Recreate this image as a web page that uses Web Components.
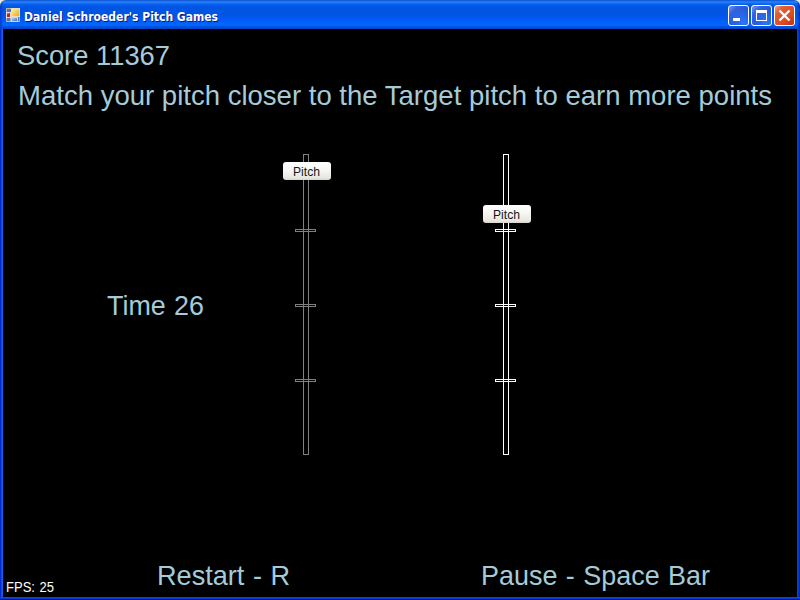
<!DOCTYPE html>
<html lang="en">
<head>
<meta charset="utf-8">
<title>Daniel Schroeder's Pitch Games</title>
<style>
html,body{margin:0;width:800px;height:600px;overflow:hidden;background:#ece9d8}
</style>
</head>
<body>
<game-window></game-window>
<script>
const define = (name, html) => customElements.define(name, class extends HTMLElement {
  constructor() {
    super();
    const t = document.createElement('template');
    t.innerHTML = html;
    this.attachShadow({mode: 'open'}).append(t.content.cloneNode(true));
  }
});

/* One line of text fitted to a given advance width. */
customElements.define('game-text', class extends HTMLElement {
  connectedCallback() {
    if (this.shadowRoot) return;
    const w = +this.getAttribute('length'), h = +this.getAttribute('height'), size = this.getAttribute('size');
    const root = this.attachShadow({mode: 'open'});
    root.innerHTML = `<style>:host{display:block;width:${w}px;height:${h}px}
      svg{display:block;overflow:visible}
      text{fill:currentColor;font-family:inherit;font-size:${size}px}</style>
      <svg width="${w}" height="${h}"><text x="0" y="${this.getAttribute('base')}" textLength="${w}" lengthAdjust="spacingAndGlyphs"></text></svg>`;
    root.querySelector('text').textContent = this.getAttribute('text');
  }
});

define('window-icon', `<style>:host{display:block;width:14px;height:14px}svg{display:block}</style>
<svg width="14" height="14" viewBox="0 0 14 14" shape-rendering="crispEdges">
<defs><linearGradient id="y" x2="1" y2="1"><stop stop-color="#fff3a0"/><stop offset="1" stop-color="#efa711"/></linearGradient>
<linearGradient id="b" x2="1" y2="1"><stop stop-color="#b5d0fa"/><stop offset="1" stop-color="#386cd0"/></linearGradient></defs>
<path d="M0 0h5v4H0zM0 10h5v4H0zM12 9h2v5h-2z" fill="#b9b5a9"/>
<path d="M1 1h4v3H1zM1 10h3v3H1zM12 9h1v4h-1z" fill="#4775ce"/>
<rect y="4" width="5" height="6" fill="#e6d9d0"/><rect x="1" y="5" width="3" height="4" fill="#c22518"/><rect x="1" y="5" width="2" height="1" fill="#ee7258"/>
<rect x="5" width="9" height="9" fill="#e8dfb8"/><rect x="6" y="1" width="7" height="7" fill="url(#y)"/>
<rect x="5" y="9" width="7" height="5" fill="#c9d7ed"/><rect x="6" y="10" width="5" height="3" fill="url(#b)"/>
</svg>`);

define('window-button', `<style>
:host{display:block;box-sizing:border-box;width:21px;height:21px;border:1px solid #fff;border-radius:3px;
background:radial-gradient(circle at 75% 85%,#2b79fa,transparent 65%),linear-gradient(135deg,#7898ec 0,#3463df 25%,#1f51d5 70%,#1742bd 100%)}
:host([kind=close]){background:linear-gradient(135deg,#f3a288 0,#df5c37 25%,#df4b20 65%,#b9330b 100%)}
svg{display:block}g{display:none}
:host([kind=min]) .min,:host([kind=max]) .max,:host([kind=close]) .close{display:block}
</style><svg width="19" height="19" viewBox="0 0 19 19">
<g class="min" fill="#fff"><path d="M4 12h7v3H4z"/></g>
<g class="max" fill="#fff"><path fill-rule="evenodd" d="M4 4h11v11H4zM5 7v7h9V7z"/></g>
<g class="close" stroke="#fff" stroke-width="2.3"><path d="M4.5 4.5l10 10M14.5 4.5l-10 10"/></g></svg>`);

define('title-bar', `<style>
:host{box-sizing:border-box;display:flex;align-items:center;width:800px;height:29px;padding:1px 5px 0 6px;color:#fff;
font-family:"DejaVu Sans Condensed","DejaVu Sans",sans-serif;font-weight:bold;border-radius:6px 6px 0 0;
background:linear-gradient(90deg,#0639c8 0,transparent 3px,transparent 797px,#002eb2 100%),linear-gradient(#0a50cf 0,#2a83fa 2px,#0a62f0 4px,#0055e3 7px,#0055e5 15px,#005cf6 20px,#0266fe 25px,#0052de 27px,#0042c8 29px)}
game-text{margin-left:4px;margin-top:3px;text-shadow:1px 1px #0a1883}
.buttons{display:flex;gap:2px;margin-left:auto;margin-top:1px}
window-icon{margin-top:0}
</style><window-icon></window-icon>
<game-text text="Daniel Schroeder's Pitch Games" length="194" height="16" base="12" size="12"></game-text>
<div class="buttons"><window-button kind="min"></window-button><window-button kind="max"></window-button><window-button kind="close"></window-button></div>`);

/* Vertical pitch track with three ticks and a thumb; --value is the thumb's offset from the top. */
define('pitch-slider', `<style>
:host{display:block;position:relative;width:48px;height:301px;color:#fff}
:host([muted]){color:#808080}
svg{display:block}
.thumb{position:absolute;left:0;top:var(--value);box-sizing:border-box;width:48px;height:18px;border-radius:3px;
background:linear-gradient(#fff,#f5f5f1 50%,#e6e6df 90%,#d4d2c8);color:#16161a;padding-left:10px}
</style><svg width="48" height="301" fill="none" stroke="currentColor" shape-rendering="crispEdges">
<rect x="20.5" y=".5" width="5" height="300"/><rect x="12.5" y="75.5" width="20" height="2"/>
<rect x="12.5" y="150.5" width="20" height="2"/><rect x="12.5" y="225.5" width="20" height="2"/></svg>
<div class="thumb"><game-text text="Pitch" length="27" height="18" base="14" size="13"></game-text></div>`);

define('game-window', `<style>
:host{display:block;width:800px;height:600px;font-family:"Liberation Sans",Arial,sans-serif}
.body{box-sizing:border-box;height:571px;border:solid;border-width:0 3px 3px;border-color:#0848e0;background:#000;color:#a5cbd9;
border-image:linear-gradient(90deg,#0020b5 0,#0831d9 1px,#166aee 2px,#0855dd 3px,#0841d9 797px,#0441d8 798px,#001ea0 800px) 3;
display:flex;flex-direction:column}
.head{padding:6px 0 0 14px}
.hint{margin-left:1px}
.main{display:grid;grid-template-columns:280px 200px 1fr;margin-top:39px;height:301px;word-spacing:1px}
.time{padding:131px 0 0 104px}
.foot{display:flex;margin-top:auto;height:50px;word-spacing:1px}
.fps{color:#fff;padding:27px 0 0 3px;width:154px;box-sizing:border-box}
.pause{margin-left:191px}
.edge{height:3px;margin-top:-3px;position:relative;background:linear-gradient(#0b4be3 0 1px,#0837d0 1px 2px,#00138c 2px)}
</style><title-bar></title-bar>
<div class="body">
<div class="head">
<game-text text="Score 11367" length="153" height="40" base="30" size="28"></game-text>
<game-text class="hint" text="Match your pitch closer to the Target pitch to earn more points" length="754" height="40" base="30" size="28"></game-text>
</div>
<div class="main">
<div class="time"><game-text text="Time 26" length="97" height="40" base="30" size="28"></game-text></div>
<pitch-slider muted style="--value:8px"></pitch-slider>
<pitch-slider style="--value:51px"></pitch-slider>
</div>
<div class="foot">
<div class="fps"><game-text text="FPS: 25" length="48" height="20" base="18" size="14"></game-text></div>
<game-text text="Restart - R" length="133" height="40" base="38" size="28"></game-text>
<game-text class="pause" text="Pause - Space Bar" length="229" height="40" base="38" size="28"></game-text>
</div>
</div><div class="edge"></div>`);
</script>
</body>
</html>
